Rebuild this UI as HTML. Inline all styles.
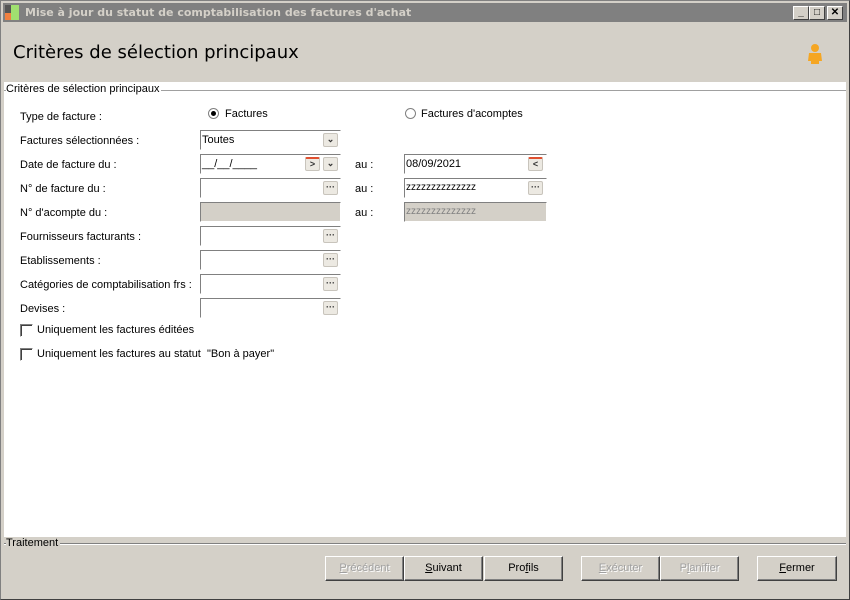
<!DOCTYPE html>
<html><head><meta charset="utf-8"><style>
*{margin:0;padding:0;box-sizing:border-box}
body{width:850px;height:600px;background:#d4d0c8;font-family:"Liberation Sans",Arial,sans-serif;font-size:11px;color:#000;position:relative;overflow:hidden}
.a{position:absolute}
.win{left:0;top:0;width:850px;height:600px;border:1px solid #808080;border-right-color:#404040;border-bottom-color:#404040}
.tb{left:3px;top:3px;width:844px;height:19px;background:#808080;color:#d4d0c8;font-family:"DejaVu Sans",sans-serif;font-size:11px;font-weight:bold;line-height:19px;padding-left:22px}
.wb{top:6px;width:16px;height:14px;background:#d4d0c8;border:1px solid;border-color:#fff #404040 #404040 #fff;font-size:10px;line-height:12px;text-align:center;color:#000;font-weight:bold}
.white{left:4px;top:82px;width:842px;height:455px;background:#fff}
.f{height:20px;background:#fff;border:1px solid;border-color:#808080 #fff #fff #808080;font-size:11px;line-height:18px;padding-left:1px}
.f.dis{background:#d4d0c8}
.bt{width:15px;height:14px;background:#ece9e2;border:1px solid #c8c4bc;border-radius:2px;font-size:9px;line-height:10px;text-align:center;color:#333;font-weight:bold}
.btn{top:556px;height:25px;width:79px;background:#d4d0c8;border:1px solid;border-color:#fff #404040 #404040 #fff;box-shadow:inset -1px -1px 0 #808080;text-align:center;line-height:22px;font-size:11px}
.btn.d{color:#a0a0a0;text-shadow:1px 1px 0 #fff}
.cb{width:13px;height:13px;border:1px solid;border-color:#808080 #fff #fff #808080;box-shadow:inset 1px 1px 0 #404040;background:#fff}
.rd{width:11px;height:11px;border-radius:50%;border:1px solid #808080;background:#fff}
</style></head><body>
<div class="a win"></div>
<div class="a tb">Mise à jour du statut de comptabilisation des factures d'achat</div>
<div class="a" style="left:5px;top:5px;width:6px;height:15px;background:#555"></div>
<div class="a" style="left:5px;top:13px;width:6px;height:7px;background:#f08040"></div>
<div class="a" style="left:11px;top:5px;width:8px;height:15px;background:#a0e070"></div>
<div class="a wb" style="left:793px">_</div>
<div class="a wb" style="left:809px">□</div>
<div class="a wb" style="left:827px">✕</div>
<div class="a" style="left:13px;top:42px;font-size:18px;font-family:'DejaVu Sans',sans-serif">Critères de sélection principaux</div>
<svg class="a" style="left:806px;top:43px" width="18" height="22"><circle cx="9" cy="5" r="4" fill="#f5a623"/><path d="M3 10h12l1 8h-3v3H5v-3H2z" fill="#f5a623"/></svg>
<div class="a white"></div>
<div class="a" style="left:4px;top:90px;width:842px;border-top:1px solid #a0a0a0"></div>
<div class="a" style="left:6px;top:83px;background:#fff;padding-right:2px">Critères de sélection principaux</div>

<div class="a" style="left:20px;top:111px">Type de facture :</div>
<div class="a rd" style="left:208px;top:108px"><div style="width:5px;height:5px;border-radius:50%;background:#000;margin:2px"></div></div>
<div class="a" style="left:225px;top:108px">Factures</div>
<div class="a rd" style="left:405px;top:108px"></div>
<div class="a" style="left:421px;top:108px">Factures d'acomptes</div>

<div class="a" style="left:20px;top:135px">Factures sélectionnées :</div>
<div class="a f" style="left:200px;top:130px;width:141px">Toutes</div><div class="a bt" style="left:323px;top:133px">⌄</div>

<div class="a" style="left:20px;top:159px">Date de facture du :</div>
<div class="a f" style="left:200px;top:154px;width:141px">__/__/____</div>
<div class="a bt" style="left:305px;top:157px;border-top:2px solid #e05030">&gt;</div><div class="a bt" style="left:323px;top:157px">⌄</div>
<div class="a" style="left:355px;top:159px">au :</div>
<div class="a f" style="left:404px;top:154px;width:143px">08/09/2021</div>
<div class="a bt" style="left:528px;top:157px;border-top:2px solid #e05030">&lt;</div>

<div class="a" style="left:20px;top:183px">N° de facture du :</div>
<div class="a f" style="left:200px;top:178px;width:141px"></div><div class="a bt" style="left:323px;top:181px">···</div>
<div class="a" style="left:355px;top:183px">au :</div>
<div class="a f" style="left:404px;top:178px;width:143px;font-size:10px">zzzzzzzzzzzzzz</div><div class="a bt" style="left:528px;top:181px">···</div>

<div class="a" style="left:20px;top:207px">N° d'acompte du :</div>
<div class="a f dis" style="left:200px;top:202px;width:141px"></div>
<div class="a" style="left:355px;top:207px">au :</div>
<div class="a f dis" style="left:404px;top:202px;width:143px;font-size:10px;color:#808080">zzzzzzzzzzzzzz</div>

<div class="a" style="left:20px;top:231px">Fournisseurs facturants :</div>
<div class="a f" style="left:200px;top:226px;width:141px"></div><div class="a bt" style="left:323px;top:229px">···</div>
<div class="a" style="left:20px;top:255px">Etablissements :</div>
<div class="a f" style="left:200px;top:250px;width:141px"></div><div class="a bt" style="left:323px;top:253px">···</div>
<div class="a" style="left:20px;top:279px">Catégories de comptabilisation frs :</div>
<div class="a f" style="left:200px;top:274px;width:141px"></div><div class="a bt" style="left:323px;top:277px">···</div>
<div class="a" style="left:20px;top:303px">Devises :</div>
<div class="a f" style="left:200px;top:298px;width:141px"></div><div class="a bt" style="left:323px;top:301px">···</div>

<div class="a cb" style="left:20px;top:324px"></div><div class="a" style="left:37px;top:324px">Uniquement les factures éditées</div>
<div class="a cb" style="left:20px;top:348px"></div><div class="a" style="left:37px;top:348px">Uniquement les factures au statut &nbsp;"Bon à payer"</div>

<div class="a" style="left:4px;top:543px;width:842px;border-top:1px solid #808080;border-bottom:1px solid #fff"></div>
<div class="a" style="left:6px;top:537px;background:#d4d0c8;padding-right:2px">Traitement</div>

<div class="a btn d" style="left:325px"><u>P</u>récédent</div>
<div class="a btn" style="left:404px"><u>S</u>uivant</div>
<div class="a btn" style="left:484px">Pro<u>f</u>ils</div>
<div class="a btn d" style="left:581px"><u>E</u>xécuter</div>
<div class="a btn d" style="left:660px">P<u>l</u>anifier</div>
<div class="a btn" style="left:757px;width:80px"><u>F</u>ermer</div>
</body></html>
